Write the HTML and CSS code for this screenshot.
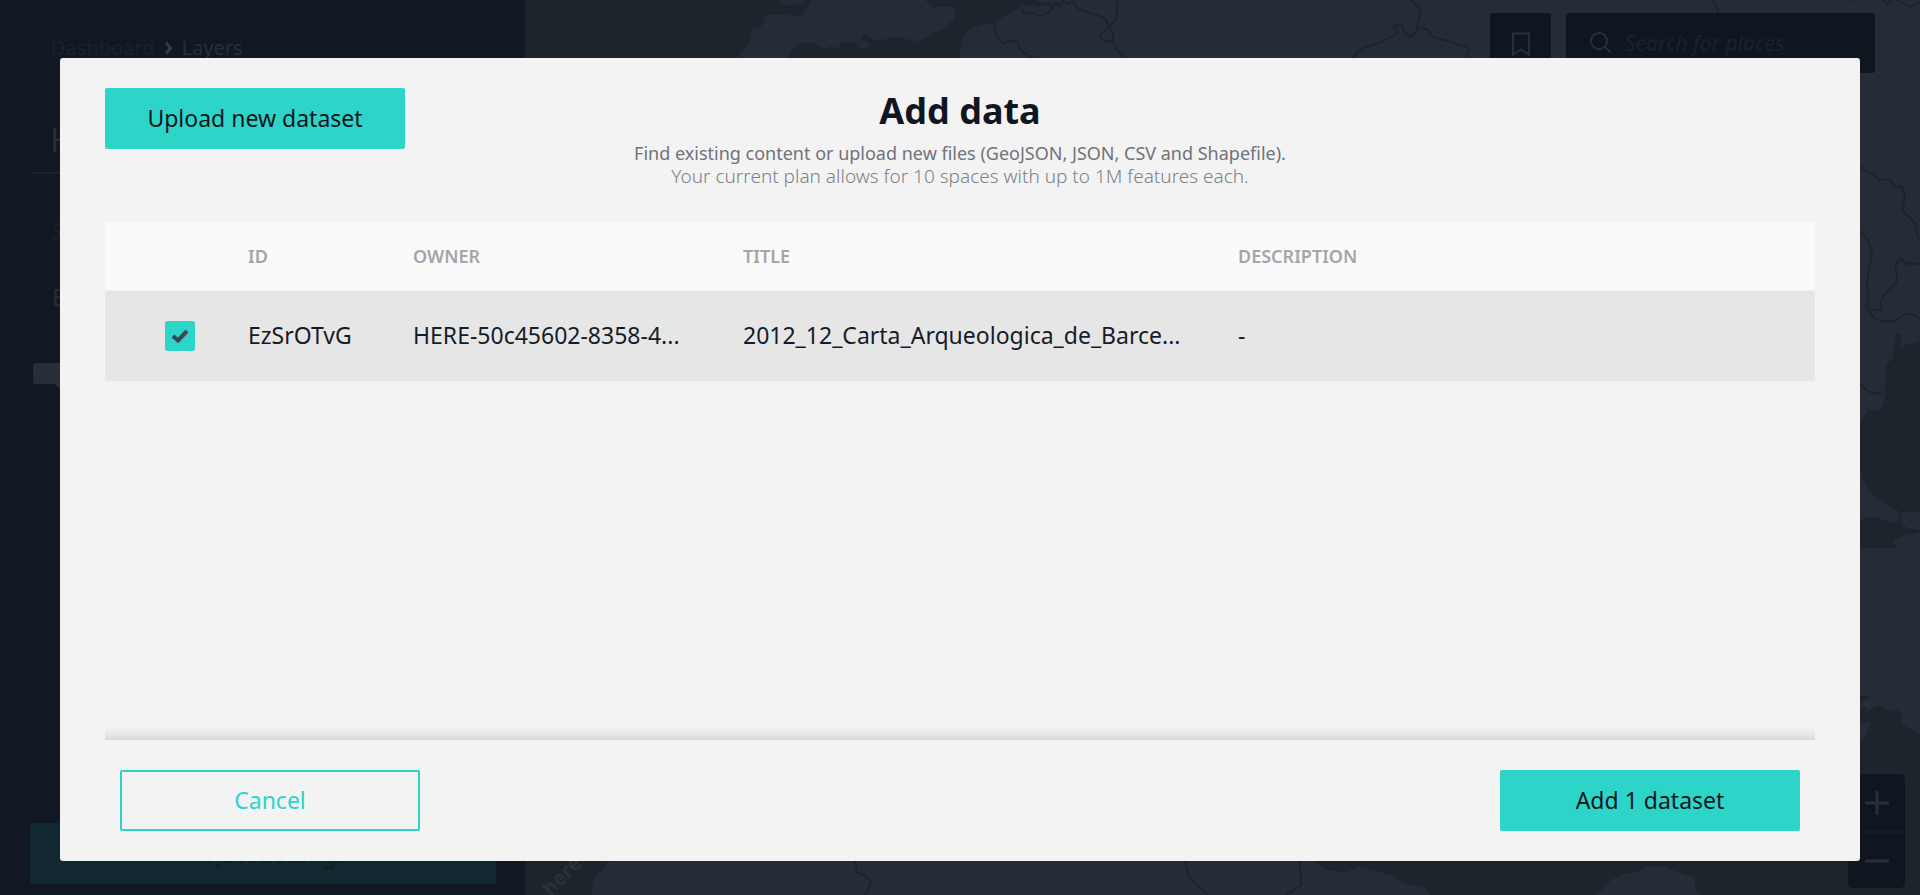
FILE: index.html
```html
<!DOCTYPE html>
<html lang="en">
<head>
<meta charset="utf-8">
<title>Add data</title>
<link rel="stylesheet" href="styles.css">
</head>
<body>
<div class="workspace">
  <aside class="sidebar">
    <nav class="crumbs" aria-label="Breadcrumb">
      <a class="crumb-link" href="#">Dashboard</a>
      <svg class="crumb-arrow" viewBox="0 0 8 14" aria-hidden="true"><path d="M1.5 1.5 6 7l-4.500 5.500"/></svg>
      <span>Layers</span>
    </nav>
    <h2 class="project-name">H</h2>
    <p class="project-note">S</p>
    <p class="layer-name">E</p>
    <svg class="tag" viewBox="0 0 30 27" aria-hidden="true"><path d="M2 0h25v26l-5-5H2q-2 0-2-2V2q0-2 2-2z"/></svg>
    <button class="settings" type="button">Project Settings</button>
  </aside>
  <main class="map">
    <svg class="map-art" viewBox="525 0 1395 895" preserveAspectRatio="xMidYMid slice" aria-hidden="true">
      <g class="land">
        <path d="M736 58 750 42 753 28 761 27 765 15 781 14 799 17 804 14 812 0H925L933 7H955V18L941 31 933 32Q920 42 914 41 896 34 879 41L863 35 860 42 840 43 839 49 832 46 825 49Q812 40 806 43 792 44 788 58z"/>
        <path d="M855 44 863 40 870 44 864 50zM780 0 786 5H797L805 0zM570 0Q575 2 580 0z"/>
        <path d="M960 58Q959 38 969 30 980 25 994 22L1020 8 1022 5 1040 6 1044 3 1029 0H1920V330L1919 341 1900 347 1901 335 1896 333 1893 357 1886 366 1884 402 1880 411 1868 410 1860 425V468Q1862 487 1877 498L1900 512H1920V531L1907 528 1899 522 1893 523 1870 517 1860 522V548H1898L1892 541 1905 535 1920 532V733Q1903 727 1902 722V715L1899 710 1893 711 1878 705 1866 712V707L1860 707V850H1313L1313 861 1326 870 1346 872 1360 867 1391 875 1403 883 1425 888 1432 895H591L593 880 609 861 700 700 960 600z"/>
        <path d="M1597 895 1611 880 1626 873 1638 872 1647 866 1664 867 1695 878V889L1701 895zM1860 724 1871 721 1865 737 1860 739z"/>
      </g>
      <path class="sea" d="M1850 425H1860V468Q1860 480 1850 480zM1850 522 1872 517 1893 523 1898 522 1907 528 1920 531V532L1905 535 1892 541 1898 548H1850zM1860 696H1872L1860 704zM1850 705 1866 712 1860 722H1850z"/>
      <g class="borders">
        <path d="M994 22Q996 40 1004 43L1013 40 1018 43Q1020 54 1033 57M1022 8 1024 14 1031 12 1040 16 1049 12 1056 3 1060 5 1064 1 1068 4 1073 2 1080 10 1087 12 1105 18 1109 27 1100 35 1103 40 1113 42 1118 51 1123 57M1118 0 1116 20 1109 27 1113 33V42M1032 0 1042 5 1048 4 1052 7"/>
        <path d="M1410 0Q1422 8 1420 15L1416 32 1411 37 1403 30 1402 25 1394 26 1398 33 1385 40 1378 43 1365 47 1358 52 1352 58M1416 32 1419 27 1428 30 1432 37 1452 42 1461 46 1466 45Q1471 50 1465 57M1713 0 1719 13M1852 0 1854 2M1883 0 1887 4 1892 0M1897 0 1910 7 1920 3"/>
        <path d="M1860 166 1867 172 1873 173 1879 180 1890 179 1896 188 1902 186 1905 197 1902 210 1915 223 1917 235 1920 240M1860 231Q1868 237 1872 253 1868 274 1867 285L1869 305M1880 301 1888 291 1896 283 1897 275Q1892 262 1902 259L1906 265 1909 263 1920 264M1869 300 1866 305 1873 317Q1881 323 1892 321L1898 319Q1910 308 1920 320M1871 310H1881L1880 301M1860 383Q1865 394 1883 394"/>
        <path d="M1900 512 1899 522M855 861 857 872Q870 877 871 883L865 895M1185 861Q1187 873 1193 882L1209 895M1300 861 1301 885 1286 895"/>
      </g>
      <text class="map-label" transform="translate(551 897) rotate(-46)">here</text>
    </svg>
    <div class="map-tools">
      <button class="bookmark" type="button" aria-label="Bookmarks">
        <svg width="20" height="26" viewBox="0 0 20 26"><path d="M2 3.500h16v21l-8-5-8 5z"/></svg>
      </button>
      <label class="search">
        <svg width="22" height="22" viewBox="0 0 22 22" aria-hidden="true"><circle cx="9" cy="9" r="8"/><path d="m15 15 6 6"/></svg>
        <input type="search" placeholder="Search for places" aria-label="Search for places">
      </label>
    </div>
    <div class="zoom">
      <button type="button" aria-label="Zoom in"><svg width="24" height="24" viewBox="0 0 24 24"><path d="M12 0v24M0 12h24"/></svg></button>
      <button type="button" aria-label="Zoom out"><svg width="24" height="24" viewBox="0 0 24 24"><path d="M0 12h24"/></svg></button>
    </div>
  </main>
</div>

<div class="overlay">
  <section class="modal" role="dialog" aria-modal="true" aria-labelledby="modal-title">
    <header class="modal-head">
      <button class="btn" type="button">Upload new dataset</button>
      <div class="heading">
        <h1 id="modal-title">Add data</h1>
        <p class="lead">Find existing content or upload new files (GeoJSON, JSON, CSV and Shapefile).</p>
        <p class="plan">Your current plan allows for 10 spaces with up to 1M features each.</p>
      </div>
    </header>
    <div class="table-area">
      <table class="datasets">
        <colgroup><col class="c-edge"><col class="c-check"><col class="c-id"><col class="c-owner"><col class="c-title"><col></colgroup>
        <thead>
          <tr><th></th><th></th><th scope="col">ID</th><th scope="col">OWNER</th><th scope="col">TITLE</th><th scope="col">DESCRIPTION</th></tr>
        </thead>
        <tbody>
          <tr><td></td><td class="check-cell"><label class="check"><input type="checkbox" checked aria-label="Select EzSrOTvG"><svg viewBox="0 0 18 14" aria-hidden="true"><path d="m2 7 5 4.500 9-9.500"/></svg></label></td><td>EzSrOTvG</td><td>HERE-50c45602-8358-4...</td><td>2012_12_Carta_Arqueologica_de_Barce...</td><td>-</td></tr>
        </tbody>
      </table>
    </div>
    <footer class="modal-foot">
      <button class="btn btn-outline" type="button">Cancel</button>
      <button class="btn" type="button">Add 1 dataset</button>
    </footer>
  </section>
</div>
</body>
</html>
```
FILE: styles.css
```css
* { box-sizing: border-box; }

body {
  margin: 0;
  overflow: hidden;
  background: #111823;
  color: #0f1621;
  font-family: "Noto Sans", sans-serif;
}

h1, h2, p { margin: 0; }
button, input { font: inherit; color: inherit; }
button { border: 0; padding: 0; }

.workspace {
  display: flex;
  height: 100vh;
}

/* Sidebar */
.sidebar {
  display: flex;
  flex-direction: column;
  flex: 0 0 525px;
  padding: 35px 29px 11px 30px;
  color: #272e37;
}

.crumbs {
  display: flex;
  align-items: center;
  gap: 9px;
  padding-left: 21px;
  font-size: 20px;
  line-height: 26px;
}

.crumb-link {
  color: #1a212b;
  text-decoration: none;
}

.crumb-arrow {
  width: 9px;
  height: 14px;
  fill: none;
  stroke: #343a43;
  stroke-width: 3;
}

.project-name {
  padding: 55px 20px 8px;
  border-bottom: 2px solid #1a212b;
  font-size: 32px;
  font-weight: 400;
  line-height: 48px;
}

.project-note {
  padding: 44px 21px 0;
  color: #1a212b;
  font-size: 22px;
  font-style: italic;
  line-height: 24px;
}

.layer-name {
  padding: 35px 22px 0;
  font-size: 24px;
  line-height: 40px;
}

.tag {
  width: 30px;
  height: 27px;
  margin: 46px 0 0 3px;
  fill: #272e37;
}

.settings {
  height: 61px;
  margin-top: auto;
  border-radius: 2px;
  background: #122830;
  color: #101c26;
  font-size: 23px;
}

/* Map */
.map {
  position: relative;
  display: flex;
  flex-direction: column;
  flex: 1;
  justify-content: space-between;
  align-items: flex-end;
  background: #1d232c;
}

.map-art {
  position: absolute;
  inset: 0;
  width: 100%;
  height: 100%;
  background: #1d242c;
}

.land { fill: #262c37; }
.sea { fill: #1d242c; }

.borders {
  fill: none;
  stroke: #1d232d;
  stroke-width: 2;
}

.map-label {
  fill: #2a313b;
  font-size: 20px;
  font-weight: 700;
}

.map-tools {
  position: relative;
  display: flex;
  gap: 15px;
  padding: 13px 45px 0 0;
}

.bookmark,
.search {
  display: flex;
  align-items: center;
  height: 60px;
  border-radius: 3px;
  background: #0f1620;
}

.bookmark {
  justify-content: center;
  width: 61px;
}

.search {
  gap: 13px;
  width: 309px;
  padding: 0 24px;
}

.map-tools svg,
.zoom svg {
  flex: none;
  fill: none;
  stroke: #282f39;
  stroke-width: 3;
}

.map-tools svg { stroke-width: 2; }

.search input {
  min-width: 0;
  width: 100%;
  border: 0;
  padding: 0;
  background: none;
  font-size: 21px;
  font-style: italic;
}

.search input::placeholder { color: #1b222c; }

.zoom {
  position: relative;
  display: flex;
  flex-direction: column;
  width: 57px;
  margin: 0 15px 7px 0;
  border-radius: 5px;
  background: #0f1620;
}

.zoom button {
  display: flex;
  align-items: center;
  justify-content: center;
  height: 57px;
  background: none;
}

.zoom button + button { border-top: 2px solid #151c26; }

/* Dialog */
.overlay {
  position: fixed;
  inset: 0;
  display: flex;
  padding: 58px 60px 34px;
}

.modal {
  display: flex;
  flex-direction: column;
  flex: 1;
  padding: 30px 45px;
  border-radius: 3px;
  background: #f3f3f3;
}

.modal-head {
  display: grid;
  grid-template-columns: 300px 1fr 300px;
  align-items: start;
}

.btn {
  width: 300px;
  height: 61px;
  padding-bottom: 2px;
  border-radius: 2px;
  background: #2dd5c9;
  font-size: 23px;
}

.btn-outline {
  border: 2px solid #2dd5c9;
  background: none;
  color: #2dd5c9;
}

.heading {
  color: #6f737a;
  font-size: 18px;
  line-height: 23px;
  text-align: center;
}

.heading h1 {
  padding-bottom: 8px;
  color: #0f1621;
  font-size: 36px;
  font-weight: 700;
  line-height: 46px;
}

.plan {
  color: #7d8087;
  font-size: 19px;
  font-weight: 300;
}

.table-area {
  flex: 1;
  padding-top: 34px;
  box-shadow: inset 0 -15px 15px -15px #bcbcbc;
}

.datasets {
  width: 100%;
  border-spacing: 0;
  table-layout: fixed;
}

.c-edge { width: 30px; }
.c-check { width: 83px; }
.c-id { width: 165px; }
.c-owner { width: 330px; }
.c-title { width: 495px; }

.datasets th,
.datasets td {
  padding: 0 0 0 30px;
  text-align: left;
  white-space: nowrap;
}

.datasets th:first-child,
.datasets td:first-child { border-radius: 3px 0 0 3px; }
.datasets th:last-child,
.datasets td:last-child { border-radius: 0 3px 3px 0; }

.datasets th {
  height: 69px;
  border-bottom: 1px solid #f0f0f0;
  background: #fafafa;
  color: #a3a5a9;
  font-size: 18px;
  font-weight: 600;
}

.datasets td {
  height: 90px;
  padding-bottom: 3px;
  background: #e6e6e6;
  color: #151c28;
  font-size: 23px;
}

.datasets .check-cell,
.datasets td:first-child,
.datasets th:first-child {
  padding-bottom: 0;
}

.datasets td:first-child,
.datasets th:first-child { padding-left: 0; }

.check {
  display: grid;
  width: 30px;
  height: 30px;
}

.check input,
.check svg { grid-area: 1 / 1; }

.check input {
  appearance: none;
  width: 30px;
  height: 30px;
  margin: 0;
  border-radius: 3px;
  background: #2dd5c9;
}

.check svg {
  place-self: center;
  width: 18px;
  height: 14px;
  fill: none;
  stroke: #3f454e;
  stroke-width: 4;
  pointer-events: none;
}

.modal-foot {
  display: flex;
  justify-content: space-between;
  padding: 30px 15px 0;
}
```
